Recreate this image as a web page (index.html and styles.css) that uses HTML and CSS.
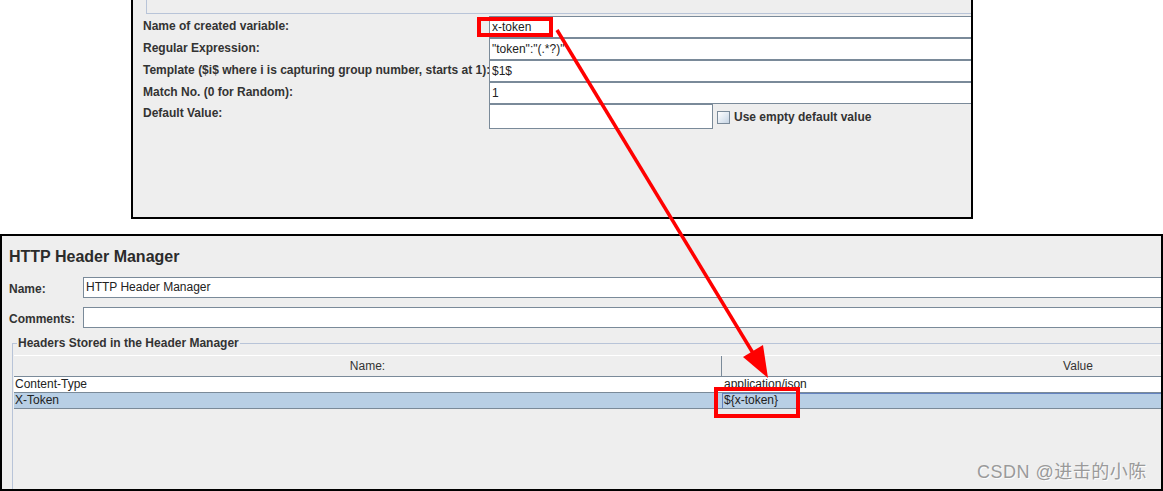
FILE: index.html
```html
<!DOCTYPE html>
<html>
<head>
<meta charset="utf-8">
<link rel="stylesheet" href="styles.css">
</head>
<body>
<div class="page">
  <section class="top-panel">
    <div class="titled-remnant"></div>
    <div class="row">
      <span class="label">Name of created variable:</span>
      <div class="field">x-token</div>
    </div>
    <div class="row">
      <span class="label">Regular Expression:</span>
      <div class="field">"token":"(.*?)"</div>
    </div>
    <div class="row">
      <span class="label">Template ($i$ where i is capturing group number, starts at 1):</span>
      <div class="field">$1$</div>
    </div>
    <div class="row">
      <span class="label">Match No. (0 for Random):</span>
      <div class="field">1</div>
    </div>
    <div class="row row-default">
      <span class="label">Default Value:</span>
      <div class="field field-short"></div>
      <span class="checkbox"></span>
      <span class="check-label">Use empty default value</span>
    </div>
  </section>

  <section class="bottom-panel">
    <h1 class="title">HTTP Header Manager</h1>
    <div class="brow">
      <span class="blabel">Name:</span>
      <div class="bfield">HTTP Header Manager</div>
    </div>
    <div class="brow brow-comments">
      <span class="blabel">Comments:</span>
      <div class="bfield"></div>
    </div>
    <fieldset class="group">
      <legend>Headers Stored in the Header Manager</legend>
      <div class="table">
        <div class="thead">
          <div class="th th-name">Name:</div>
          <div class="th">Value</div>
        </div>
        <div class="tr">
          <div class="td">Content-Type</div>
          <div class="td td-value">application/json</div>
        </div>
        <div class="tr tr-selected">
          <div class="td">X-Token</div>
          <div class="td td-value td-focus">${x-token}</div>
        </div>
      </div>
    </fieldset>
  </section>

  <div class="red-box red-box-top"></div>
  <div class="red-box red-box-bottom"></div>
  <svg class="arrow" width="1163" height="491" viewBox="0 0 1163 491">
    <line x1="557" y1="30" x2="756" y2="358" stroke="#ff0000" stroke-width="3.5"/>
    <polygon points="768,378 743,357 763,345" fill="#ff0000"/>
  </svg>
  <div class="watermark">CSDN @进击的小陈</div>
</div>
</body>
</html>
```

FILE: styles.css
```css
html, body {
  margin: 0;
  padding: 0;
  background: #ffffff;
}

.page {
  position: relative;
  width: 1163px;
  height: 491px;
  overflow: hidden;
  font-family: "Liberation Sans", Arial, sans-serif;
  font-size: 12px;
  color: #333333;
}

/* ---------- top panel ---------- */
.top-panel {
  margin-left: 131px;
  width: 842px;
  height: 219px;
  box-sizing: border-box;
  border: 2px solid #000;
  border-top: none;
  background: #eeeeee;
  overflow: hidden;
}

.titled-remnant {
  margin-left: 13px;
  height: 14px;
  box-sizing: border-box;
  border-left: 1px solid #b8c4d8;
  border-bottom: 1px solid #b8c4d8;
  margin-bottom: 2px;
}

.row {
  display: flex;
  align-items: center;
  height: 22px;
}

.row .label {
  margin-top: -2px;
}

.row-default {
  height: 26px;
  align-items: flex-start;
}

.label {
  flex-shrink: 0;
  width: 346px;
  padding-left: 10px;
  font-weight: bold;
  white-space: nowrap;
  line-height: 14px;
  color: #333;
}

.row-default .label {
  margin-top: 0;
  padding-top: 2px;
}

.field {
  flex-shrink: 0;
  position: relative;
  width: 500px;
  height: 22px;
  box-sizing: border-box;
  border: 1px solid #7a8a99;
  background: #ffffff;
  padding-left: 2px;
  line-height: 20px;
  color: #222;
  white-space: nowrap;
}

.field-short {
  width: 224px;
  height: 25px;
}

.checkbox {
  flex-shrink: 0;
  width: 13px;
  height: 13px;
  box-sizing: border-box;
  margin: 7px 0 0 4px;
  border: 1px solid #7a8a99;
  background: linear-gradient(135deg, #ffffff 0%, #dde6f0 60%, #c5d3e2 100%);
}

.check-label {
  margin: 6px 0 0 4px;
  font-weight: bold;
  line-height: 14px;
  white-space: nowrap;
}

/* ---------- bottom panel ---------- */
.bottom-panel {
  margin-top: 15px;
  width: 1163px;
  height: 257px;
  box-sizing: border-box;
  border: 2px solid #000;
  background: #eeeeee;
  overflow: hidden;
}

.title {
  margin: 12px 0 0 7px;
  font-size: 16px;
  line-height: 18px;
  font-weight: bold;
  color: #2b2b2b;
}

.brow {
  display: flex;
  align-items: center;
  height: 21px;
  margin-top: 11px;
}

.brow-comments {
  margin-top: 9px;
}

.blabel {
  flex-shrink: 0;
  width: 74px;
  padding-left: 7px;
  font-weight: bold;
  color: #333;
  line-height: 14px;
  margin-top: 2px;
}

.bfield {
  flex-shrink: 0;
  width: 1100px;
  height: 21px;
  box-sizing: border-box;
  border: 1px solid #7a8a99;
  background: #fff;
  padding-left: 2px;
  line-height: 19px;
  color: #222;
  white-space: nowrap;
}

.group {
  margin: 8px 0 0 10px;
  padding: 0 0 0 1px;
  border: none;
  border-top: 1px solid #b8c4d8;
  border-left: 1px solid #b8c4d8;
  min-width: 0;
  height: 200px;
}

.group legend {
  margin-left: 3px;
  padding: 0 1px;
  font-weight: bold;
  line-height: 14px;
  color: #333;
}

.table {
  margin-top: 5px;
  width: 1420px;
}

.thead {
  display: grid;
  grid-template-columns: 708px 712px;
  height: 22px;
  box-sizing: border-box;
  border-top: 1px solid #ffffff;
  border-bottom: 1px solid #7a8a99;
  background: #eeeeee;
}

.th {
  text-align: center;
  line-height: 21px;
  color: #333;
}

.th-name {
  border-right: 1px solid #7a8a99;
}

.tr {
  display: grid;
  grid-template-columns: 708px 712px;
  height: 16px;
  box-sizing: border-box;
  border-bottom: 1px solid #7a8a99;
  background: #ffffff;
}

.tr-selected {
  background: #b8cfe5;
}

.td {
  padding-left: 1px;
  line-height: 15px;
  color: #222;
  white-space: nowrap;
}

.td-value {
  padding-left: 2px;
}

.td-focus {
  box-shadow: inset 1px 0 0 #6382bf, inset 0 1px 0 #6382bf;
}

/* ---------- overlays ---------- */
.red-box {
  position: absolute;
  box-sizing: border-box;
  border: 4px solid #ff0000;
}

.red-box-top {
  left: 477px;
  top: 17px;
  width: 76px;
  height: 20px;
}

.red-box-bottom {
  left: 714px;
  top: 387px;
  width: 86px;
  height: 31px;
}

.arrow {
  position: absolute;
  left: 0;
  top: 0;
  pointer-events: none;
}

.watermark {
  position: absolute;
  left: 977px;
  top: 462px;
  font-family: "Liberation Sans", "Noto Sans CJK SC", sans-serif;
  font-size: 18px;
  line-height: 20px;
  letter-spacing: 0.5px;
  color: #9a9a9a;
  text-shadow: 1px 1px 0 rgba(255, 255, 255, 0.8);
  white-space: nowrap;
}
```
